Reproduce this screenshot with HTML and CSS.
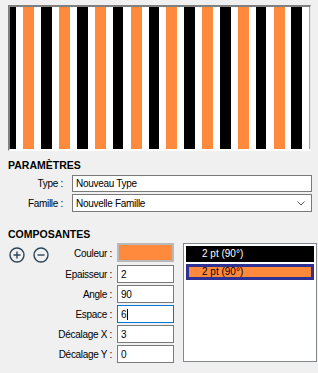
FILE: index.html
```html
<!DOCTYPE html>
<html>
<head>
    <title>Motif</title>
    <link rel="stylesheet" href="styles.css">
</head>
<body>
    <div class="preview"></div>

    <section class="group">
        <h2>PARAMÈTRES</h2>
        <div class="params">
            <label>Type :</label>
            <div class="field type">Nouveau Type</div>
            <label>Famille :</label>
            <div class="field select">
                <span>Nouvelle Famille</span>
                <svg class="chevron" width="8" height="5" viewBox="0 0 8 5"><polyline points="0.5,0.5 4,4 7.5,0.5" fill="none" stroke="#555" stroke-width="1"/></svg>
            </div>
        </div>
    </section>

    <section class="group">
        <h2>COMPOSANTES</h2>
        <div class="comp">
            <div class="props">
                <div class="tools">
                    <svg width="16" height="16" viewBox="0 0 16 16"><circle cx="8" cy="8" r="7" fill="none" stroke="#2b4558" stroke-width="1.4"/><path d="M4.5 8h7M8 4.5v7" stroke="#2b4558" stroke-width="1.4"/></svg>
                    <svg width="16" height="16" viewBox="0 0 16 16"><circle cx="8" cy="8" r="7" fill="none" stroke="#2b4558" stroke-width="1.4"/><path d="M4.5 8h7" stroke="#2b4558" stroke-width="1.4"/></svg>
                </div>
                <label>Couleur :</label>
                <div class="swatch"></div>

                <label class="span">Epaisseur :</label>
                <div class="field">2</div>
                <label class="span">Angle :</label>
                <div class="field">90</div>
                <label class="span">Espace :</label>
                <div class="field focus">6<span class="caret"></span></div>
                <label class="span">Décalage X :</label>
                <div class="field">3</div>
                <label class="span">Décalage Y :</label>
                <div class="field">0</div>
            </div>

            <ul class="list">
                <li class="dark">2 pt (90°)</li>
                <li class="sel">2 pt (90°)</li>
            </ul>
        </div>
    </section>
</body>
</html>
```

FILE: styles.css
```css
body {
    margin: 0;
    background-color: #f0f0f0;
    font-family: "Liberation Sans", Arial, sans-serif;
    font-size: 10px;
    color: #000;
}

/* stripes start 4.75px into a black band */
.preview {
    margin: 5px 7px 0 8px;
    height: 146px;
    box-sizing: border-box;
    border-style: solid;
    border-width: 2px 1px 2px 2px;
    border-color: #808080 #e8e8e8 #fff #808080;
    background-image: repeating-linear-gradient(90deg,
        #000 0 6.25px,
        #fff 6.25px 13.25px,
        #ff8a3d 13.25px 24.25px,
        #fff 24.25px 31.25px,
        #000 31.25px 35.75px);
}

h2 {
    margin: 8px 0 0 8px;
    font-size: 10.5px;
    line-height: 12px;
    font-weight: bold;
}

.group + .group h2 {
    margin-top: 16px;
}

label {
    text-align: right;
    padding-right: 1px;
    letter-spacing: -0.3px;
    align-self: center;
}

.params {
    display: grid;
    grid-template-columns: 64px 1fr;
    column-gap: 8px;
    row-gap: 2px;
    margin: 4px 6px 0 0;
}

.field {
    display: flex;
    align-items: center;
    box-sizing: border-box;
    height: 18px;
    padding: 0 3px;
    border: 1px solid #7a7a7a;
    background-color: #fff;
    letter-spacing: -0.3px;
}

.field.type {
    height: 17px;
}

.field.select {
    justify-content: space-between;
    padding-right: 6px;
}

.field.focus {
    border-color: #0078d7;
}

.caret {
    display: inline-block;
    width: 1px;
    height: 11px;
    margin-left: 1px;
    background-color: #000;
}

.comp {
    display: flex;
    align-items: flex-start;
    margin-top: 3px;
    padding-left: 9px;
}

.props {
    display: grid;
    grid-template-columns: 46px 54px 57px;
    column-gap: 4px;
    row-gap: 2px;
}

.props .span {
    grid-column: 1 / 3;
}

.tools {
    display: flex;
    gap: 8px;
    align-self: start;
    margin-top: 4px;
}

.swatch {
    box-sizing: border-box;
    height: 19px;
    border: 2px solid #b9b9b9;
    background-color: #ff8a3d;
}

.list {
    list-style: none;
    margin: 0 0 0 9px;
    padding: 2px;
    width: 134px;
    height: 119px;
    box-sizing: border-box;
    border: 1px solid #828790;
    background-color: #fff;
}

.list li {
    height: 16px;
    line-height: 16px;
    box-sizing: border-box;
    margin-bottom: 2px;
}

.list .dark {
    background-color: #000;
    color: #fff;
    padding-left: 16px;
}

.list .sel {
    background-color: #ff8a3d;
    border: 3px solid #2e3192;
    line-height: 10px;
    padding-left: 13px;
}
```
